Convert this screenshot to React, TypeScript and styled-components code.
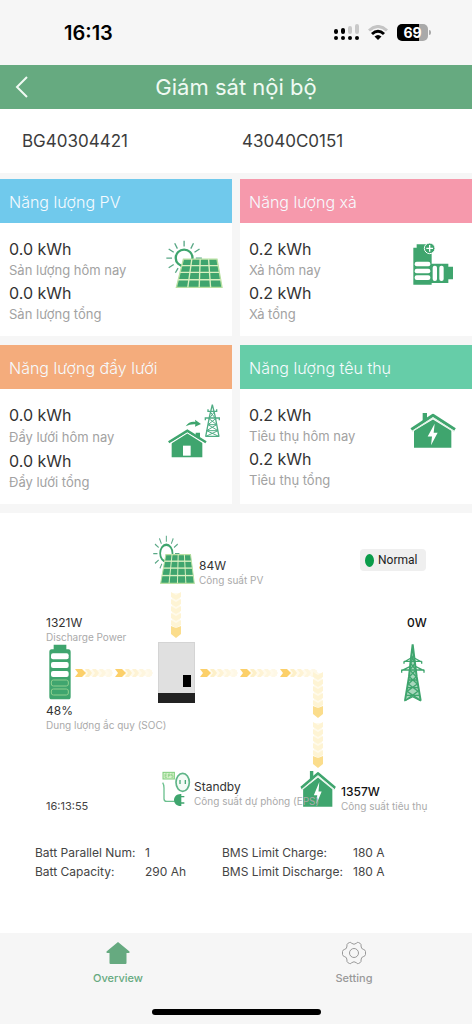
import React from "react";
import styled, { createGlobalStyle } from "styled-components";

const GREEN = "#3fa56e";
const BRAND = "#66aa80";

const GlobalStyle = createGlobalStyle`
  *, *::before, *::after { box-sizing: border-box; }
  body {
    margin: 0;
    background: #f6f6f6;
    font-family: Inter, "Liberation Sans", sans-serif;
    color: #333;
  }
  h1, h2, p, dl, dd { margin: 0; font-weight: 400; }
  svg { display: block; }
`;

const Page = styled.div`
  min-height: 100vh;
  display: flex;
  flex-direction: column;
  overflow-x: hidden;
`;

/* ---------- top ---------- */

const StatusBar = styled.div`
  height: 65px;
  padding: 0 41px 0 64px;
  display: flex;
  align-items: center;
  justify-content: space-between;
`;

const Clock = styled.time`
  font-size: 20px;
  line-height: 24px;
  font-weight: 600;
  color: #000;
`;

const StatusIcons = styled.div`
  display: flex;
  align-items: center;
  gap: 9px;
`;

const Battery = styled.span`
  position: relative;
  width: 31px;
  height: 17px;
  border-radius: 5px;
  background: linear-gradient(to right, #000 70%, #a9a9a9 70%);
  color: #fff;
  font-size: 14px;
  line-height: 17px;
  font-weight: 700;
  text-align: center;
  margin-right: 3px;

  &::after {
    content: "";
    position: absolute;
    left: 32px;
    top: 6px;
    width: 2px;
    height: 5px;
    border-radius: 0 2px 2px 0;
    background: #a9a9a9;
  }
`;

const Header = styled.header`
  height: 44px;
  background: ${BRAND};
  color: #f0faf3;
  display: grid;
  grid-template-columns: 44px 1fr 44px;
  align-items: center;
`;

const BackButton = styled.button`
  border: 0;
  padding: 0 0 0 15px;
  height: 44px;
  background: none;
  color: inherit;
`;

const Title = styled.h1`
  font-size: 22px;
  line-height: 44px;
  text-align: center;
`;

const Serials = styled.div`
  height: 64px;
  padding: 0 22px;
  background: #fff;
  display: grid;
  grid-template-columns: 1fr 1fr;
  column-gap: 12px;
  align-items: center;
  font-size: 17px;
  line-height: 22px;
  color: #3c3c3c;
`;

/* ---------- cards ---------- */

const Cards = styled.section`
  padding: 6px 0 9px;
  display: grid;
  grid-template-columns: 1fr 1fr;
  gap: 9px 8px;
  background: #f6f6f6;
`;

const Card = styled.article`
  background: #fff;
  display: flex;
  flex-direction: column;
`;

const CardTitle = styled.h2<{ $color: string }>`
  height: 44px;
  padding-left: 9px;
  background: ${(p) => p.$color};
  color: #f6fbff;
  font-size: 16px;
  line-height: 46px;
  font-weight: 300;
`;

const CardBody = styled.div<{ $height: number }>`
  height: ${(p) => p.$height}px;
  padding: 15px 9px 0;
  display: flex;
  justify-content: space-between;
`;

const Reading = styled.p`
  font-size: 16px;
  line-height: 22px;
`;

const Caption = styled.p<{ $line?: number }>`
  margin-bottom: 2px;
  font-size: 13px;
  line-height: ${(p) => p.$line ?? 20}px;
  color: #a2a2a2;
`;

const CardIcon = styled.div<{ $top: number; $right: number }>`
  padding: ${(p) => p.$top}px ${(p) => p.$right}px 0 0;
`;

/* ---------- diagram ---------- */

const Main = styled.main`
  flex: 1;
  background: #fff;
`;

const Diagram = styled.section`
  position: relative;
  width: 472px;
  height: 328px;
  margin: 0 auto;
`;

const Node = styled.div<{ $x: number; $y: number }>`
  position: absolute;
  left: ${(p) => p.$x}px;
  top: ${(p) => p.$y}px;
`;

const NodeValue = styled.p<{ $dark?: boolean }>`
  font-size: 12px;
  line-height: 14px;
  font-weight: ${(p) => (p.$dark ? 500 : 400)};
  white-space: nowrap;
  color: ${(p) => (p.$dark ? "#111" : "#333")};
`;

const NodeLabel = styled.p`
  font-size: 10px;
  line-height: 14px;
  white-space: nowrap;
  color: #aaa;
`;

const Stamp = styled.time`
  font-size: 11px;
  line-height: 14px;
  color: #444;
`;

const Status = styled.div`
  width: 66px;
  height: 22px;
  padding-left: 5px;
  display: flex;
  align-items: center;
  gap: 4px;
  border-radius: 4px;
  background: #efefef;
  font-family: Roboto, sans-serif;
  font-size: 12px;
  color: #222;
`;

const StatusDot = styled.span`
  width: 9px;
  height: 13px;
  border-radius: 50%;
  background: #0a9c4a;
`;

const Stats = styled.dl`
  width: 472px;
  margin: 0 auto;
  padding: 2px 0 0 35px;
  display: grid;
  grid-template-columns: 110px 77px 131px auto;
  font-size: 12px;
  line-height: 19px;
  white-space: nowrap;
  color: #444;
`;

/* ---------- tabs ---------- */

const TabBar = styled.nav`
  position: relative;
  height: 91px;
  background: #f6f6f6;
  display: grid;
  grid-template-columns: 1fr 1fr;
  align-items: start;
`;

const Tab = styled.a<{ $active?: boolean }>`
  padding-top: 8px;
  display: flex;
  flex-direction: column;
  align-items: center;
  gap: 5px;
  font-size: 11px;
  line-height: 16px;
  font-weight: 500;
  text-decoration: none;
  color: ${(p) => (p.$active ? BRAND : "#999")};
`;

const HomeIndicator = styled.div`
  position: absolute;
  left: 50%;
  bottom: 9px;
  width: 169px;
  height: 6px;
  margin-left: -84px;
  border-radius: 3px;
  background: #000;
`;

/* ---------- drawings ---------- */

type Size = { width: number; height: number };

const SolarIcon = ({ width, height }: Size) => {
  const left = (t: number) => 550 - 21 * t;
  const right = (t: number) => 650 + 15 * t;
  return (
    <svg width={width} height={height} viewBox="498 210 170 145" preserveAspectRatio="none" aria-hidden>
      <g stroke="#5aa886" strokeWidth="4" fill="none">
        <path d="M552 212v18M524 220l8 16M580 220l-8 16M598 237l-15 10M506 237l15 10M499 265h17M587 265h18M506 294l15-10M526 309l8-14" />
        <circle cx="552" cy="264" r="25" stroke="#3fa56e" strokeWidth="7" fill="#fff" />
      </g>
      <path d="M550 268H650L665 353H529Z" fill={GREEN} stroke="#b7dfa0" strokeWidth="4" />
      <g stroke="#d9f0c0" strokeWidth="4">
        {[0.23, 0.47, 0.73].map((t) => (
          <line key={t} x1={left(t)} x2={right(t)} y1={268 + 85 * t} y2={268 + 85 * t} />
        ))}
        {[0.25, 0.5, 0.75].map((t) => (
          <line key={t} x1={550 + 100 * t} x2={529 + 136 * t} y1="268" y2="353" />
        ))}
      </g>
    </svg>
  );
};

const DischargeIcon = () => (
  <svg width="40" height="43" viewBox="532 217 120 129" aria-hidden>
    <path d="M543 224h36v10h9v48h50v9h14v38h-14v11h-50v5h-55V234h10z" fill={GREEN} />
    <g fill="#fff">
      <rect x="537" y="276" width="47" height="14" rx="6" />
      <rect x="537" y="297" width="47" height="14" rx="6" />
      <rect x="537" y="317" width="47" height="14" rx="6" />
      <rect x="591" y="288" width="13" height="46" rx="6" />
      <rect x="611" y="288" width="13" height="46" rx="6" />
    </g>
    <circle cx="582" cy="236" r="16" fill={GREEN} stroke="#fff" strokeWidth="3" />
    <path d="M582 226v20M572 236h20" stroke="#fff" strokeWidth="4" />
  </svg>
);

const SmallPylon = () => (
  <g stroke="#4fac84" strokeWidth="4" fill="none">
    <path d="M637 192L629 225L617 288M637 192L645 225L657 288M624 212h26M616 232h42M624 206v8M650 206v8M616 230v9M658 230v9M616 287h42" />
    <path d="M630 213L647 234L624 252L654 270L618 287M644 213L627 234L650 252L620 270L656 287M624 252h26M620 270h34" strokeWidth="3" />
  </g>
);

const ExportIcon = () => (
  <svg width="52" height="54" viewBox="504 190 156 162" aria-hidden>
    <path d="M562 272L607 302V350H515V302Z" fill={GREEN} />
    <path d="M506 311L562 276L618 311" fill="none" stroke="#fff" strokeWidth="4" />
    <path d="M506 305L562 270L618 305" fill="none" stroke={GREEN} strokeWidth="7" />
    <path d="M587 276h13v20l-13-8z" fill={GREEN} />
    <rect x="549" y="315" width="23" height="30" fill="#fff" />
    <path d="M557 257C565 245 575 242 586 244L585 237L603 250L585 258L586 251C576 250 566 253 557 257Z" fill={GREEN} />
    <SmallPylon />
  </svg>
);

const PowerHouseIcon = ({ width, height }: Size) => (
  <svg width={width} height={height} viewBox="523 217 138 107" preserveAspectRatio="none" aria-hidden>
    <path d="M561 220h13v22l-13 9z" fill={GREEN} />
    <path d="M592 239L647 273V323H535V273Z" fill={GREEN} />
    <path d="M527 269L592 227L658 269" fill="none" stroke={GREEN} strokeWidth="9" strokeLinejoin="round" />
    <path d="M529 275L592 234L656 275" fill="none" stroke="#dff2e4" strokeWidth="3" />
    <path d="M597 252L576 290H589L586 316L606 279H594Z" fill="#fff" />
  </svg>
);

const PylonIcon = () => (
  <svg width="25" height="58" viewBox="509 342 75 174" aria-hidden>
    <path d="M547 343L553 392L559 440L571 512L547 500L524 512L536 440L541 392Z" fill="#a9d8bd" />
    <g fill="none" stroke={GREEN}>
      <path d="M547 343L541 392L536 440L524 512M547 343L553 392L559 440L571 512" strokeWidth="6" />
      <path d="M521 394H574M513 420H582M521 394v7M574 394v7M514 420v8M581 420v8M521 396L542 384M574 396L552 384M514 422L540 409M581 422L555 409" strokeWidth="4" />
      <path d="M543 375L554 400L538 420L558 440L534 462L563 484L526 511M551 375L541 400L557 420L537 440L561 462L530 484L570 511M535 450H560M531 473H564M528 496H568" strokeWidth="4" />
    </g>
    <path d="M522 513l25-13 25 13" fill="none" stroke={GREEN} strokeWidth="4" />
  </svg>
);

const BatteryIcon = () => (
  <svg width="22" height="56" viewBox="56 344 66 168" aria-hidden>
    <path d="M70 346h38v14h6q7 0 7 8v134q0 8-7 8H64q-7 0-7-8V368q0-8 7-8h6z" fill={GREEN} />
    <g fill="#fff">
      <rect x="62" y="372" width="53" height="18" rx="6" />
      <rect x="62" y="398" width="53" height="18" rx="6" />
      <rect x="62" y="425" width="53" height="18" rx="6" />
    </g>
    <g fill="none" stroke="#8fd08f" strokeWidth="3">
      <rect x="63" y="452" width="51" height="18" rx="6" />
      <rect x="63" y="479" width="51" height="18" rx="6" />
    </g>
  </svg>
);

const InverterIcon = () => (
  <svg width="37" height="61" viewBox="0 0 37 61" aria-hidden>
    <rect width="37" height="61" fill="#d4d4d4" />
    <rect x="1" y="1" width="35" height="50" fill="#e0e0e0" />
    <rect x="25" y="33" width="8" height="12" fill="#000" />
    <rect y="51" width="37" height="10" fill="#222" />
  </svg>
);

const EpsIcon = () => (
  <svg width="29" height="36" viewBox="398 94 87 108" aria-hidden>
    <rect x="401" y="98" width="34" height="20" fill="#d8f2cc" stroke="#7dcc7a" strokeWidth="3" />
    <path d="M407 103v10M407 103h6M407 108h5M407 113h6M417 113v-10h5v5h-5M431 103h-5v5h5v5h-5" fill="none" stroke="#7dcc7a" strokeWidth="2" />
    <ellipse cx="460" cy="128" rx="20" ry="27" fill="#f4fbf6" stroke="#5fb588" strokeWidth="5" />
    <path d="M452 121v12M468 121v12" stroke="#4aa978" strokeWidth="4" />
    <path d="M400 129q4 6 4 16v32q0 8 8 8h24" fill="none" stroke="#6cc08f" strokeWidth="4" />
    <path d="M456 163C442 162 434 171 434 181S442 200 456 199Z" fill={GREEN} />
    <path d="M455 171h10M455 190h10" stroke={GREEN} strokeWidth="4" />
  </svg>
);

/* One pulse: a bright chevron at the origin with fading ones trailing to the right. */
const Pulse = ({ x, y }: { x: number; y: number }) => (
  <g transform={`translate(${x} ${y})`}>
    <rect x="10" y="-3" width="27" height="6" fill="#fffaeb" />
    {["#fdf0c8", "#fef3d4", "#fef6de", "#fef8e6"].map((fill, i) => (
      <path key={fill} d="M0 -4H4L7 0L4 4H0L3 0Z" transform={`translate(${10 + 7 * i} 0)`} fill={fill} />
    ))}
    <path d="M0 -4H7L11 0L7 4H0L3 0Z" fill="#fcd06a" />
  </g>
);

/* A pulse on a downward line: pale chevrons first, the bright one leads. */
const DownPulse = ({ x, y }: { x: number; y: number }) => (
  <g transform={`translate(${x} ${y})`}>
    <rect x="-4" y="1" width="8" height="33" fill="#fffaeb" />
    {[0, 7, 14, 21, 28].map((dy) => (
      <path key={dy} d="M-5 0L0 3L5 0V5L0 8L-5 5Z" transform={`translate(0 ${dy})`} fill="#fef4d4" />
    ))}
    <path d="M-5 34L0 36L5 34V42L0 46L-5 42Z" fill="#fbdd8c" />
  </g>
);

const Flow = () => (
  <svg width="472" height="328" viewBox="0 0 472 328" aria-hidden>
    {[75, 115, 200, 240, 280].map((x) => (
      <Pulse key={x} x={x} y={160} />
    ))}
    <DownPulse x={176} y={79} />
    <DownPulse x={318} y={159} />
    <DownPulse x={318} y={209} />
  </svg>
);

const Signal = () => (
  <svg width="25" height="17" viewBox="0 0 25 17" aria-hidden>
    <path d="M2 7v1M9 6v2" stroke="#000" strokeWidth="4" strokeLinecap="round" />
    <path d="M16 4v4M23 2v6" stroke="#c9c9c9" strokeWidth="4" strokeLinecap="round" />
    <g fill="#000">
      <circle cx="2" cy="14" r="2" />
      <circle cx="9" cy="14" r="2" />
      <circle cx="16" cy="14" r="2" />
      <circle cx="23" cy="14" r="2" />
    </g>
  </svg>
);

const Wifi = () => (
  <svg width="20" height="16" viewBox="0 0 20 16" fill="none" aria-hidden>
    <path d="M1 5.500Q10-2.500 19 5.500" stroke="#c4c4c4" strokeWidth="3" />
    <path d="M4 9Q10 3.500 16 9" stroke="#000" strokeWidth="3" />
    <path d="M10 15L6.500 11.500Q10 8.500 13.500 11.500Z" fill="#000" />
  </svg>
);

const BackIcon = () => (
  <svg width="13" height="22" viewBox="0 0 13 22" fill="none" aria-hidden>
    <path d="M12 1L2 11L12 21" stroke="currentColor" strokeWidth="2" />
  </svg>
);

const HomeIcon = () => (
  <svg width="24" height="24" viewBox="0 0 24 24" aria-hidden>
    <path d="M12 1L23.500 10.500Q24 12 22.500 12H20.500V22Q20.500 23 19.500 23H4.500Q3.500 23 3.500 22V12H1.500Q0 12 .5 10.500Z" fill="currentColor" />
  </svg>
);

const GearIcon = () => (
  <svg width="24" height="24" viewBox="0 0 24 24" fill="none" stroke="currentColor" strokeWidth="1" aria-hidden>
    <path d="M7.500 1.500Q9 1 9.700 2.300Q12 4.200 14.300 2.300Q15 1 16.500 1.500L18.300 2.500Q19.500 3.500 19 5Q19 8 21.800 8.600Q23.300 9 23.500 10.500V13.500Q23.300 15 21.800 15.400Q19 16 19 19Q19.500 20.500 18.300 21.500L16.500 22.500Q15 23 14.300 21.700Q12 19.800 9.700 21.700Q9 23 7.500 22.500L5.700 21.500Q4.500 20.500 5 19Q5 16 2.200 15.400Q.7 15 .5 13.500V10.500Q.7 9 2.200 8.600Q5 8 5 5Q4.500 3.500 5.700 2.500Z" />
    <circle cx="12" cy="12" r="4.500" />
  </svg>
);

/* ---------- data ---------- */

const cards = [
  { title: "Năng lượng PV", color: "#70c9ec", today: "0.0 kWh", todayLabel: "Sản lượng hôm nay", total: "0.0 kWh", totalLabel: "Sản lượng tổng", height: 113, line: 20, icon: <SolarIcon width={57} height={48} />, iconTop: 2, iconRight: 0 },
  { title: "Năng lượng xả", color: "#f699ac", today: "0.2 kWh", todayLabel: "Xả hôm nay", total: "0.2 kWh", totalLabel: "Xả tổng", height: 113, line: 20, icon: <DischargeIcon />, iconTop: 4, iconRight: 10 },
  { title: "Năng lượng đẩy lưới", color: "#f4ac7c", today: "0.0 kWh", todayLabel: "Đẩy lưới hôm nay", total: "0.0 kWh", totalLabel: "Đẩy lưới tổng", height: 115, line: 22, icon: <ExportIcon />, iconTop: 0, iconRight: 3 },
  { title: "Năng lượng têu thụ", color: "#66cda8", today: "0.2 kWh", todayLabel: "Tiêu thụ hôm nay", total: "0.2 kWh", totalLabel: "Tiêu thụ tổng", height: 115, line: 20, icon: <PowerHouseIcon width={46} height={36} />, iconTop: 8, iconRight: 7 },
];

export default function App() {
  return (
    <Page>
      <GlobalStyle />
      <StatusBar>
        <Clock>16:13</Clock>
        <StatusIcons>
          <Signal />
          <Wifi />
          <Battery>69</Battery>
        </StatusIcons>
      </StatusBar>

      <Header>
        <BackButton type="button" aria-label="Quay lại">
          <BackIcon />
        </BackButton>
        <Title>Giám sát nội bộ</Title>
      </Header>

      <Serials>
        <span>BG40304421</span>
        <span>43040C0151</span>
      </Serials>

      <Cards>
        {cards.map((c) => (
          <Card key={c.title}>
            <CardTitle $color={c.color}>{c.title}</CardTitle>
            <CardBody $height={c.height}>
              <div>
                <Reading>{c.today}</Reading>
                <Caption $line={c.line}>{c.todayLabel}</Caption>
                <Reading>{c.total}</Reading>
                <Caption>{c.totalLabel}</Caption>
              </div>
              <CardIcon $top={c.iconTop} $right={c.iconRight}>{c.icon}</CardIcon>
            </CardBody>
          </Card>
        ))}
      </Cards>

      <Main>
        <Diagram>
          <Flow />
          <Node $x={153} $y={22}><SolarIcon width={42} height={49} /></Node>
          <Node $x={199} $y={46}>
            <NodeValue>84W</NodeValue>
            <NodeLabel>Công suất PV</NodeLabel>
          </Node>
          <Node $x={360} $y={36}>
            <Status><StatusDot />Normal</Status>
          </Node>

          <Node $x={46} $y={103}>
            <NodeValue>1321W</NodeValue>
            <NodeLabel>Discharge Power</NodeLabel>
          </Node>
          <Node $x={49} $y={131}><BatteryIcon /></Node>
          <Node $x={46} $y={191}>
            <NodeValue>48%</NodeValue>
            <NodeLabel>Dung lượng ắc quy (SOC)</NodeLabel>
          </Node>

          <Node $x={158} $y={129}><InverterIcon /></Node>

          <Node $x={407} $y={103}><NodeValue $dark>0W</NodeValue></Node>
          <Node $x={400} $y={131}><PylonIcon /></Node>

          <Node $x={46} $y={281}><Stamp>16:13:55</Stamp></Node>
          <Node $x={162} $y={258}><EpsIcon /></Node>
          <Node $x={300} $y={257}><PowerHouseIcon width={36} height={37} /></Node>
          <Node $x={194} $y={267}>
            <NodeValue>Standby</NodeValue>
            <NodeLabel>Công suất dự phòng (EPS)</NodeLabel>
          </Node>
          <Node $x={341} $y={272}>
            <NodeValue $dark>1357W</NodeValue>
            <NodeLabel>Công suất tiêu thụ</NodeLabel>
          </Node>
        </Diagram>

        <Stats>
          <dt>Batt Parallel Num:</dt>
          <dd>1</dd>
          <dt>BMS Limit Charge:</dt>
          <dd>180 A</dd>
          <dt>Batt Capacity:</dt>
          <dd>290 Ah</dd>
          <dt>BMS Limit Discharge:</dt>
          <dd>180 A</dd>
        </Stats>
      </Main>

      <TabBar>
        <Tab href="#overview" $active>
          <HomeIcon />
          Overview
        </Tab>
        <Tab href="#setting">
          <GearIcon />
          Setting
        </Tab>
        <HomeIndicator />
      </TabBar>
    </Page>
  );
}
